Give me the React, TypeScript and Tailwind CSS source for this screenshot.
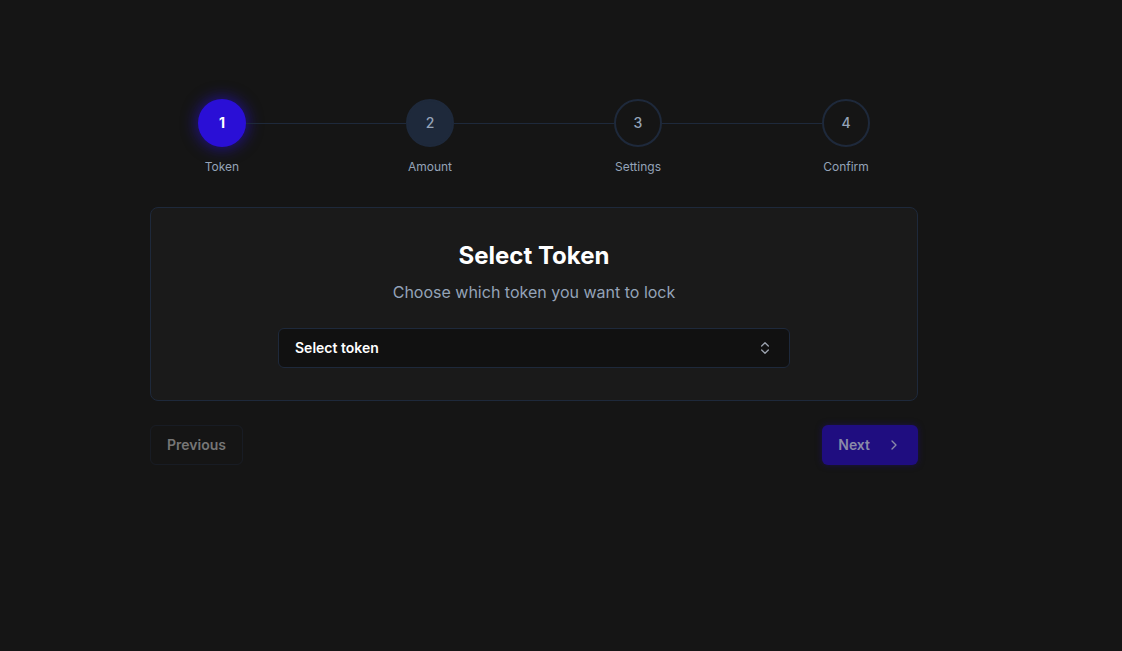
import React from "react";

const steps = [
  { n: 1, label: "Token" },
  { n: 2, label: "Amount" },
  { n: 3, label: "Settings" },
  { n: 4, label: "Confirm" },
];

function Circle({ n }: { n: number }) {
  if (n === 1)
    return (
      <div className="flex h-12 w-12 items-center justify-center rounded-full bg-[#2a0fd6] text-sm font-bold text-white shadow-[0_0_14px_3px_rgba(42,15,214,0.5)]">
        {n}
      </div>
    );
  if (n === 2)
    return (
      <div className="flex h-12 w-12 items-center justify-center rounded-full border-2 border-[#1e293b] bg-[#1e293b] text-sm font-medium text-[#94a3b8]">
        {n}
      </div>
    );
  return (
    <div className="flex h-12 w-12 items-center justify-center rounded-full border-2 border-[#1e293b] text-sm font-medium text-[#94a3b8]">
      {n}
    </div>
  );
}

export default function App() {
  return (
    <div
      className="min-h-[651px] w-full bg-[#151515] pt-[99px]"
      style={{ fontFamily: "Inter, 'Liberation Sans', sans-serif" }}
    >
      <div className="ml-[150px] w-[768px]">
        <div className="px-12">
          <div className="flex items-center">
            {steps.map((s, i) => (
              <React.Fragment key={s.n}>
                <Circle n={s.n} />
                {i < steps.length - 1 && <div className="h-px flex-1 bg-[#1e293b]" />}
              </React.Fragment>
            ))}
          </div>
          <div className="mt-3 flex justify-between">
            {steps.map((s) => (
              <div key={s.n} className="flex w-12 justify-center">
                <span className="whitespace-nowrap text-xs text-[#94a3b8]">{s.label}</span>
              </div>
            ))}
          </div>
        </div>

        <div className="mt-8 rounded-lg border border-[#1e293b] bg-[#1a1a1a] p-8">
          <h2 className="text-center text-2xl font-bold text-white">Select Token</h2>
          <p className="mt-2 text-center text-base text-[#94a3b8]">Choose which token you want to lock</p>
          <div className="mx-auto mt-6 flex h-10 w-[512px] items-center justify-between rounded-md border border-[#1e293b] bg-[#111111] pl-4 pr-4">
            <span className="text-sm font-semibold text-white">Select token</span>
            <svg width="16" height="16" viewBox="0 0 24 24" fill="none" stroke="#9ca3af" strokeWidth="2" strokeLinecap="round" strokeLinejoin="round">
              <path d="m7 15 5 5 5-5" />
              <path d="m7 9 5-5 5 5" />
            </svg>
          </div>
        </div>

        <div className="mt-6 flex items-center justify-between">
          <button className="h-10 rounded-md border border-[#1e293b]/40 px-4 text-sm font-semibold text-[#767676]">
            Previous
          </button>
          <button className="flex h-10 items-center gap-2 rounded-md bg-[#1f0d80] px-4 text-sm font-semibold text-[#8a8aa8] shadow-[0_0_6px_rgba(31,13,128,0.5)]">
            Next
            <svg width="16" height="16" viewBox="0 0 24 24" fill="none" stroke="currentColor" strokeWidth="2" strokeLinecap="round" strokeLinejoin="round" className="ml-2">
              <path d="m9 18 6-6-6-6" />
            </svg>
          </button>
        </div>
      </div>
    </div>
  );
}
